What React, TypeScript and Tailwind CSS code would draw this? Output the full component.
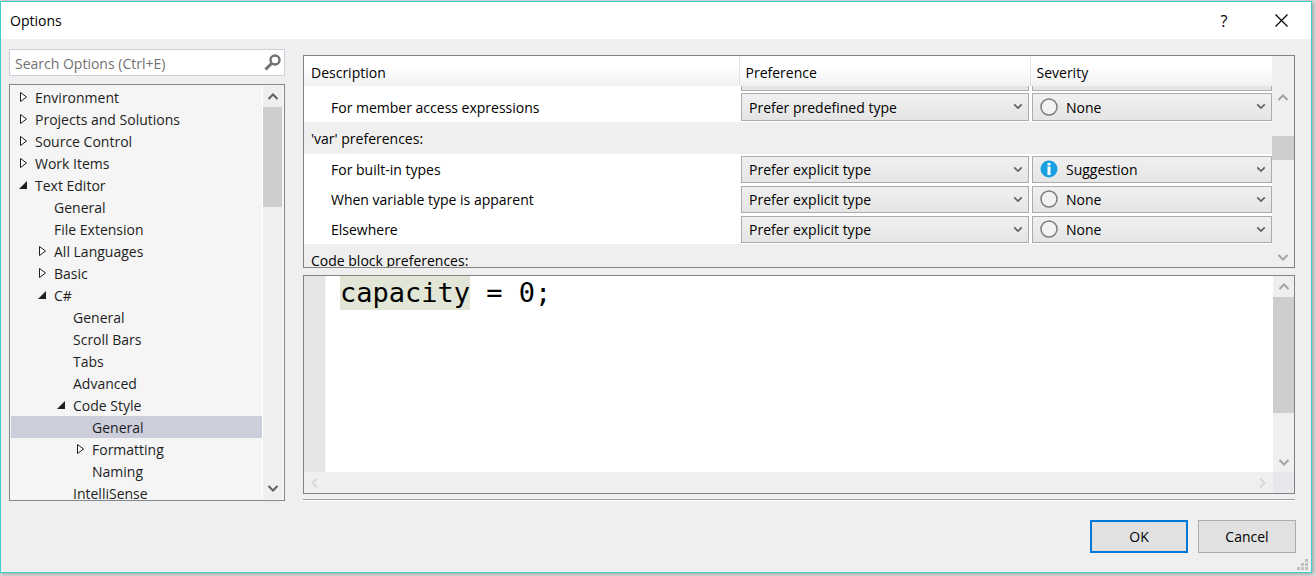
import { useState } from 'react';

type TreeNode = { label: string; level: number; state?: 'open' | 'closed' };

const treeNodes: TreeNode[] = [
  { label: 'Environment', level: 0, state: 'closed' },
  { label: 'Projects and Solutions', level: 0, state: 'closed' },
  { label: 'Source Control', level: 0, state: 'closed' },
  { label: 'Work Items', level: 0, state: 'closed' },
  { label: 'Text Editor', level: 0, state: 'open' },
  { label: 'General', level: 1 },
  { label: 'File Extension', level: 1 },
  { label: 'All Languages', level: 1, state: 'closed' },
  { label: 'Basic', level: 1, state: 'closed' },
  { label: 'C#', level: 1, state: 'open' },
  { label: 'General', level: 2 },
  { label: 'Scroll Bars', level: 2 },
  { label: 'Tabs', level: 2 },
  { label: 'Advanced', level: 2 },
  { label: 'Code Style', level: 2, state: 'open' },
  { label: 'General', level: 3 },
  { label: 'Formatting', level: 3, state: 'closed' },
  { label: 'Naming', level: 3 },
  { label: 'IntelliSense', level: 2 },
];

const indents = ['pl-[7px]', 'pl-[26px]', 'pl-[45px]', 'pl-[64px]'];

const varRows = [
  { label: 'For built-in types', severity: 'Suggestion' },
  { label: 'When variable type is apparent', severity: 'None' },
  { label: 'Elsewhere', severity: 'None' },
];

type Direction = 'up' | 'down' | 'left' | 'right';

const chevrons: Record<Direction, string> = {
  up: 'M1.5 8 L6 3.5 L10.5 8',
  down: 'M1.5 4 L6 8.5 L10.5 4',
  left: 'M8 1.5 L3.5 6 L8 10.5',
  right: 'M4 1.5 L8.5 6 L4 10.5',
};

function Chevron({ dir, className }: { dir: Direction; className: string }) {
  return (
    <svg viewBox="0 0 12 12" className={className} fill="none" stroke="currentColor" strokeWidth="2" aria-hidden="true">
      <path d={chevrons[dir]} />
    </svg>
  );
}

function Expander({ state }: { state?: 'open' | 'closed' }) {
  return (
    <svg viewBox="0 0 11 12" className="h-3 w-[11px] shrink-0" aria-hidden="true">
      {state === 'closed' && <path d="M2.5 1.5 V10.5 L8.5 6 Z" fill="#fff" stroke="#1e1e1e" />}
      {state === 'open' && <path d="M9 2 V10 H1 Z" fill="#1e1e1e" />}
    </svg>
  );
}

function SeverityIcon({ severity }: { severity: string }) {
  return (
    <svg viewBox="0 0 18 18" className="pointer-events-none absolute left-2 top-1/2 size-[18px] -translate-y-1/2" aria-hidden="true">
      {severity === 'Suggestion' ? (
        <>
          <circle cx="9" cy="9" r="8.5" fill="#1ba1e2" />
          <path d="M7.5 3 h3 v2.5 h-3 z M7.5 6.5 h3 v8.5 h-3 z" fill="#fff" />
        </>
      ) : (
        <circle cx="9" cy="9" r="8" fill="#f2f2f2" stroke="#7c7c7c" strokeWidth="1.5" />
      )}
    </svg>
  );
}

interface ComboProps {
  label: string;
  initial: string;
  options: string[];
  withIcon?: boolean;
  tall?: boolean;
}

function Combo({ label, initial, options, withIcon, tall }: ComboProps) {
  const [value, setValue] = useState(initial);

  return (
    <div className="relative">
      <select
        aria-label={label}
        value={value}
        onChange={e => setValue(e.target.value)}
        className={`block w-full appearance-none border border-[#acacac] bg-linear-to-b from-[#f0f0f0] to-[#e5e5e5] pr-6 pt-[2px] text-black outline-none ${
          tall ? 'h-7' : 'h-[27px]'
        } ${withIcon ? 'pl-[33px]' : 'pl-[7px]'}`}
      >
        {options.map(o => <option key={o}>{o}</option>)}
      </select>
      {withIcon && <SeverityIcon severity={value} />}
      <Chevron dir="down" className="pointer-events-none absolute right-[6px] top-2 size-[10px] text-[#606060]" />
    </div>
  );
}

const severities = ['None', 'Suggestion', 'Warning', 'Error'];
const typeOptions = ['Prefer predefined type', 'Prefer framework type'];
const varOptions = ['Prefer explicit type', "Prefer 'var'"];

interface PreferenceRowProps {
  label: string;
  preference: string;
  options: string[];
  severity: string;
  tall?: boolean;
}

function PreferenceRow({ label, preference, options, severity, tall }: PreferenceRowProps) {
  return (
    <tr className="h-[30px] bg-white">
      <td className="p-0 pl-[27px] pt-[2px]">{label}</td>
      <td className="p-0 pl-[2px] pr-px">
        <Combo label={`${label} preference`} initial={preference} options={options} tall={tall} />
      </td>
      <td className="p-0 pl-[2px]">
        <Combo label={`${label} severity`} initial={severity} options={severities} withIcon tall={tall} />
      </td>
    </tr>
  );
}

function OptionsTree() {
  const [selected, setSelected] = useState(15);

  return (
    <div className="flex h-[417px] overflow-hidden border border-[#828790] bg-[#f5f5f5] p-px pr-[2px]">
      <ul role="tree" aria-label="Option pages" className="min-w-0 flex-1">
        {treeNodes.map((node, i) => (
          <li key={i} role="treeitem" aria-selected={i === selected}>
            <button
              type="button"
              onClick={() => setSelected(i)}
              className={`flex h-[22px] w-full items-center gap-[6px] text-left text-[#1e1e1e] ${indents[node.level]} ${
                i === selected ? 'bg-[#cccedb]' : ''
              }`}
            >
              <Expander state={node.state} />
              <span className="whitespace-nowrap pt-[2px]">{node.label}</span>
            </button>
          </li>
        ))}
      </ul>
      <div className="flex w-5 flex-col items-center border-l border-white bg-[#efefef] text-[#606060]">
        <div className="flex h-[21px] items-center"><Chevron dir="up" className="size-3" /></div>
        <div className="h-[100px] w-full bg-[#cdcdcd]" />
        <Chevron dir="down" className="mb-[5px] mt-auto size-3" />
      </div>
    </div>
  );
}

function PreferenceTable() {
  return (
    <div className="flex h-[213px] overflow-hidden border border-[#828282] bg-white">
      <div className="min-w-0 flex-1">
        <table className="w-full table-fixed border-collapse text-left text-black">
          <colgroup>
            <col />
            <col className="w-[291px]" />
            <col className="w-[242px]" />
          </colgroup>
          <thead>
            <tr className="h-[30px] bg-linear-to-b from-white from-40% to-[#f0f1f3]">
              <th className="border-r border-[#e3e4e6] p-0 pl-[7px] pt-1 font-normal">Description</th>
              <th className="border-r border-[#e3e4e6] p-0 pl-[6px] pt-1 font-normal">Preference</th>
              <th className="p-0 pl-[6px] pt-1 font-normal">Severity</th>
            </tr>
          </thead>
          <tbody>
            {/* bottom edge of the row scrolled under the header */}
            <tr className="h-[6px]" aria-hidden="true">
              <td className="p-0" />
              <td className="p-0 pl-[2px] pr-px align-top"><div className="h-[5px] border border-t-0 border-[#acacac] bg-[#e5e5e5]" /></td>
              <td className="p-0 pl-[2px] align-top"><div className="h-[5px] border border-t-0 border-[#acacac] bg-[#e5e5e5]" /></td>
            </tr>
            <PreferenceRow
              label="For member access expressions"
              preference="Prefer predefined type"
              options={typeOptions}
              severity="None"
              tall
            />
            <tr className="h-8 bg-[#efefef]">
              <td colSpan={3} className="p-0 pl-[7px] pt-[2px]">'var' preferences:</td>
            </tr>
            {varRows.map(row => (
              <PreferenceRow
                key={row.label}
                label={row.label}
                preference="Prefer explicit type"
                options={varOptions}
                severity={row.severity}
              />
            ))}
            <tr className="h-8 bg-[#efefef]">
              <td colSpan={3} className="p-0 pl-[7px] pt-[2px]">Code block preferences:</td>
            </tr>
          </tbody>
        </table>
      </div>
      <div className="flex w-[22px] flex-col items-center bg-[#efefef] text-[#a3a3a3]">
        <Chevron dir="up" className="mt-9 size-3" />
        <div className="mt-8 h-6 w-full bg-[#cdcdcd]" />
        <Chevron dir="down" className="mb-1 mt-auto size-3" />
      </div>
    </div>
  );
}

function CodePreview() {
  return (
    <div className="flex h-[219px] flex-col overflow-hidden border border-[#828282] bg-white">
      <div className="flex min-h-0 flex-1">
        <div className="w-[22px] border-r border-[#f5f5f5] bg-[#e6e6e6]" />
        <pre className="min-w-0 flex-1 pl-[14px] font-['DejaVu_Sans_Mono',monospace] text-[27px] leading-[34px] text-black">
          <span className="inline-block bg-[#e2e6d6]">capacity</span> = 0;
        </pre>
        <div className="flex w-[21px] flex-col items-center bg-[#efefef] text-[#a3a3a3]">
          <div className="flex h-[21px] items-center"><Chevron dir="up" className="size-3" /></div>
          <div className="h-[116px] w-full bg-[#cdcdcd]" />
          <Chevron dir="down" className="mb-1 mt-auto size-3" />
        </div>
      </div>
      <div className="flex h-[21px] items-center bg-[#efefef] pl-[5px] text-[#d9d9d9]">
        <Chevron dir="left" className="size-3" />
        <Chevron dir="right" className="ml-auto mr-[5px] size-3" />
        <div className="h-full w-[21px] bg-[#e7e7ec]" />
      </div>
    </div>
  );
}

function ResizeGrip() {
  return (
    <svg viewBox="0 0 11 11" className="absolute bottom-[2px] right-[3px] size-[11px]" fill="#bfbfbf" aria-hidden="true">
      <path d="M8 0h3v3h-3z M4 4h3v3h-3z M8 4h3v3h-3z M0 8h3v3h-3z M4 8h3v3h-3z M8 8h3v3h-3z" />
    </svg>
  );
}

export default function App() {
  const [query, setQuery] = useState('');

  return (
    <div className="flex min-h-screen flex-col bg-[#dcdcdc] pb-[3px] pr-1 pt-px font-['Open_Sans',sans-serif] text-sm leading-5">
      <div
        role="dialog"
        aria-label="Options"
        className="relative flex flex-1 flex-col border border-[#41cdcd] bg-[#efefef] shadow-[1px_1px_4px_rgba(0,0,0,0.3)]"
      >
        <header className="flex h-[37px] items-center bg-white pl-[9px] text-black">
          <h1>Options</h1>
          <button type="button" aria-label="Help" className="ml-auto flex h-full w-[46px] items-center justify-center text-base">?</button>
          <button type="button" aria-label="Close" className="ml-3 mr-[7px] flex h-full w-[45px] items-center justify-center">
            <svg viewBox="0 0 13 13" className="size-[13px]" stroke="#000" strokeWidth="1.2" aria-hidden="true">
              <path d="M0.5 0.5 L12.5 12.5 M12.5 0.5 L0.5 12.5" />
            </svg>
          </button>
        </header>

        <main className="flex gap-[18px] pl-2 pr-4">
          <div className="flex w-[276px] shrink-0 flex-col gap-2 pt-[10px]">
            <label className="flex h-[27px] items-center border border-[#cccedb] bg-white pl-[5px] pr-[3px]">
              <input
                type="text"
                aria-label="Search Options"
                placeholder="Search Options (Ctrl+E)"
                value={query}
                onChange={e => setQuery(e.target.value)}
                className="min-w-0 flex-1 pt-[2px] outline-none placeholder:text-[#717171]"
              />
              <svg viewBox="0 0 17 17" className="size-[17px]" fill="none" stroke="#717171" aria-hidden="true">
                <circle cx="11" cy="6" r="4.5" strokeWidth="2.4" />
                <path d="M7.5 9.5 L1.5 15.5" strokeWidth="3" />
              </svg>
            </label>
            <OptionsTree />
          </div>

          <div className="flex min-w-0 flex-1 flex-col pt-4">
            <div className="flex flex-col gap-[7px]">
              <PreferenceTable />
              <CodePreview />
            </div>
            <hr className="mt-[5px] h-[2px] border-b border-t border-b-white border-t-[#a0a0a0]" />
          </div>
        </main>

        <footer className="flex justify-end gap-[10px] pb-[19px] pr-[15px] pt-[19px]">
          <button type="button" className="h-[33px] w-[98px] border-2 border-[#0078d7] bg-[#e1e1e1] text-black">OK</button>
          <button type="button" className="h-[33px] w-[98px] border border-[#adadad] bg-[#e1e1e1] text-black">Cancel</button>
        </footer>
        <ResizeGrip />
      </div>
    </div>
  );
}
